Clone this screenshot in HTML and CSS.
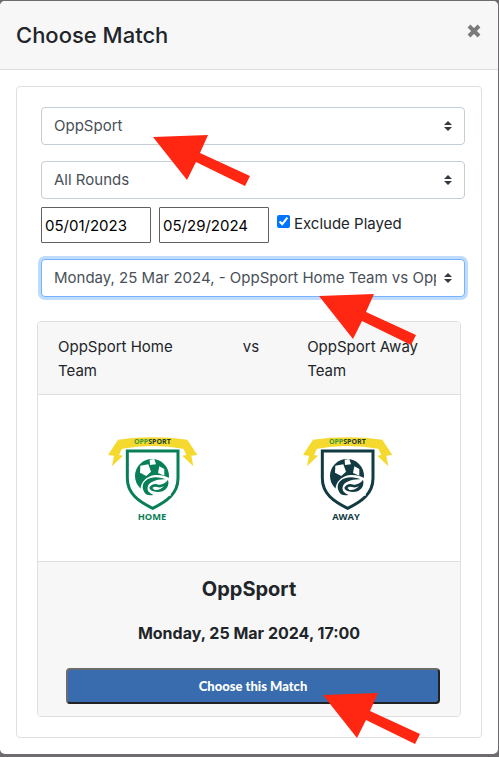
FILE: index.html
```
<!DOCTYPE html>
<html lang="en">
<head>
    <meta charset="UTF-8">
    <meta name="viewport" content="width=device-width, initial-scale=1.0">
    <title>Choose Match</title>
    <link rel="stylesheet" href="styles.css">
</head>
<body>

<!-- Shapes shared by both team badges and the arrows -->
<svg class="defs" aria-hidden="true">
    <symbol id="badge" viewBox="18 30 276 276">
        <path class="ribbon" d="M54 44 Q158 30 262 44 L254 72 Q158 54 62 72 Z"/>
        <path class="ribbon" d="M54 44 L24 90 L42 92 L36 124 L69 92 L57 90 L66 71 Z"/>
        <path class="ribbon" d="M262 44 L292 90 L274 92 L280 124 L247 92 L259 90 L250 71 Z"/>
        <path class="shield" d="M82 78 H234 V160 C234 206 200 230 158 250 C116 230 82 206 82 160 Z"/>
        <circle class="ink" cx="156" cy="153" r="51"/>
        <path class="paper" d="M121 122 L145 118 L153 140 L139 153 L120 143 Z"/>
        <path class="paper" d="M149 104 L163 102 L168 118 L150 120 Z"/>
        <path class="paper" d="M178 124 L193 132 L193 152 L174 144 Z"/>
        <path class="paper" d="M124 212 C114 182 132 154 166 150 C184 149 198 152 212 162 L212 212 Z"/>
        <path class="ink" d="M138 208 C115 182 136 158 166 157 C180 157 190 160 196 163 C168 162 146 172 143 186 C140 200 152 205 160 210 C152 212 144 211 138 208 Z"/>
        <path class="ink" d="M148 188 C153 178 164 174 176 179 C190 179 198 172 204 164 C211 190 188 207 160 199 C154 197 149 193 148 188 Z"/>
        <path class="paper" d="M157 189 Q163 183 171 186 Q182 190 192 183 Q180 197 164 195 Z"/>
    </symbol>
    <symbol id="arrow" viewBox="0 0 100 54">
        <path fill="#ff2712" d="M2 4 L57 2 L49 20 L99 43 L94 53 L45 29 L36 47 Z"/>
    </symbol>
</svg>

<div class="modal">
    <div class="modal-header">
        <h1>Choose Match</h1>
        <button type="button" class="close" aria-label="Close">
            <svg width="14" height="14" viewBox="0 0 14 14"><path d="M2 2 L12 12 M12 2 L2 12"/></svg>
        </button>
    </div>
    <div class="modal-body">
        <div class="panel">
            <form class="filters">
                <div class="field">
                    <select class="custom-select" aria-label="Competition">
                        <option>OppSport</option>
                    </select>
                    <svg class="arrow arrow-competition" aria-hidden="true"><use href="#arrow"/></svg>
                </div>
                <div class="field">
                    <select class="custom-select" aria-label="Round">
                        <option>All Rounds</option>
                    </select>
                </div>
                <div class="dates">
                    <input type="text" class="date" value="05/01/2023" aria-label="From">
                    <input type="text" class="date" value="05/29/2024" aria-label="To">
                    <div class="check">
                        <input type="checkbox" id="exclude" checked>
                        <label for="exclude">Exclude Played</label>
                    </div>
                </div>
                <div class="field">
                    <select class="custom-select active" aria-label="Match">
                        <option>Monday, 25 Mar 2024, - OppSport Home Team vs OppSport Away Team</option>
                    </select>
                    <svg class="arrow arrow-match" aria-hidden="true"><use href="#arrow"/></svg>
                </div>
            </form>

            <div class="match">
                <div class="match-header">
                    <div>OppSport Home Team</div>
                    <div class="vs">vs</div>
                    <div>OppSport Away Team</div>
                </div>
                <div class="match-logos">
                    <svg class="logo home" viewBox="18 30 276 276" role="img" aria-label="Home badge">
                        <use href="#badge" x="18" y="30" width="276" height="276"/>
                        <text class="brand" x="157" y="58"><tspan class="opp">OPP</tspan><tspan class="sport">SPORT</tspan></text>
                        <text class="side" x="156" y="284">HOME</text>
                    </svg>
                    <svg class="logo away" viewBox="18 30 276 276" role="img" aria-label="Away badge">
                        <use href="#badge" x="18" y="30" width="276" height="276"/>
                        <text class="brand" x="157" y="58"><tspan class="opp">OPP</tspan><tspan class="sport">SPORT</tspan></text>
                        <text class="side" x="153" y="284">AWAY</text>
                    </svg>
                </div>
                <div class="match-footer">
                    <h2>OppSport</h2>
                    <p>Monday, 25 Mar 2024, 17:00</p>
                    <div class="action">
                        <button type="button" class="choose">Choose this Match</button>
                        <svg class="arrow arrow-choose" aria-hidden="true"><use href="#arrow"/></svg>
                    </div>
                </div>
            </div>
        </div>
    </div>
</div>

</body>
</html>
```
FILE: styles.css
```
* {
    box-sizing: border-box;
}
body {
    margin: 0;
    padding: 1px 1px 3px 0;
    background-color: #6e6c6e;
    color: #212529;
    font-family: Inter, "Liberation Sans", sans-serif;
    font-size: 15px;
    line-height: 24px;
}
.defs {
    display: none;
}
.modal {
    background-color: #fff;
    border-radius: 5px;
    overflow: hidden;
}
.modal-header {
    display: flex;
    justify-content: space-between;
    align-items: flex-start;
    padding: 16px;
    background-color: #f7f7f7;
    border-bottom: 1px solid #dcdddf;
}
h1 {
    margin: 0;
    font-size: 22px;
    font-weight: 500;
    line-height: 36px;
}
.close {
    display: flex;
    padding: 7px 1px;
    border: none;
    background: none;
    cursor: pointer;
}
.close path {
    stroke: #7b7b7b;
    stroke-width: 4;
}
.modal-body {
    padding: 16px;
}
.panel {
    padding: 20px;
    border: 1px solid #dfdfdf;
    border-radius: 4px;
}
.filters {
    margin: 0 -4px 24px 4px;
}
.field {
    position: relative;
    margin-bottom: 16px;
}
.custom-select {
    display: block;
    width: 100%;
    height: 38px;
    padding: 6px 28px 6px 12px;
    border: 1px solid #c6ced5;
    border-radius: 4px;
    appearance: none;
    color: #495057;
    font-family: inherit;
    font-size: 15px;
    line-height: 24px;
    background: #fff url("data:image/svg+xml,%3csvg xmlns='http://www.w3.org/2000/svg' viewBox='0 0 4 5'%3e%3cpath fill='%23343a40' d='M2 0L0 2h4zm0 5L0 3h4z'/%3e%3c/svg%3e") no-repeat right 12px center / 8px 10px;
}
.custom-select.active {
    border-color: #74b4fc;
    box-shadow: 0 0 0 3px #bfdcff;
}
.dates {
    display: flex;
    gap: 8px;
    margin: -8px 0 16px;
}
.date {
    width: 110px;
    height: 36px;
    padding: 1px 3px;
    border: 1px solid #606060;
    border-radius: 1px;
    color: #000;
    font-family: inherit;
    font-size: 15px;
}
.check {
    display: flex;
    align-items: flex-start;
    gap: 4px;
    padding-top: 5px;
}
.check input {
    width: 13px;
    height: 13px;
    margin: 3px 0;
    accent-color: #0075ff;
}
.match {
    border: 1px solid #dfdfdf;
    border-radius: 4px;
}
.match-header {
    display: grid;
    grid-template-columns: 8fr 7fr 8fr;
    padding: 13px 20px 11px;
    background-color: #f7f7f7;
    border-bottom: 1px solid #dfdfdf;
    border-radius: 3px 3px 0 0;
}
.vs {
    padding-left: 4px;
    text-align: center;
}
.match-logos {
    display: grid;
    grid-template-columns: 1fr 1fr;
    justify-items: center;
    padding: 40px 16px 34px;
}
.logo {
    width: 92px;
    height: 92px;
}
.home {
    color: #087f59;
}
.away {
    color: #123a42;
}
.ribbon {
    fill: #f5d92f;
}
.shield {
    fill: #fff;
    stroke: currentColor;
    stroke-width: 9;
}
.ink {
    fill: currentColor;
}
.paper {
    fill: #fff;
}
.brand, .side {
    font-family: "Open Sans", sans-serif;
    font-weight: 700;
    text-anchor: middle;
}
.brand {
    font-size: 21px;
}
.opp {
    fill: #3f9a3c;
}
.sport {
    fill: #173f38;
}
.side {
    font-size: 28px;
    fill: currentColor;
}
.match-footer {
    padding: 12px 20px;
    background-color: #f7f7f7;
    border-top: 1px solid #dfdfdf;
    border-radius: 0 0 3px 3px;
    text-align: center;
}
h2 {
    margin: 3px 0 21px;
    font-size: 20px;
    font-weight: 700;
    line-height: 24px;
}
p {
    margin: 0 0 24px;
    font-size: 16px;
    font-weight: 700;
    line-height: 22px;
}
.action {
    position: relative;
    margin-left: 8px;
}
.choose {
    display: block;
    width: 100%;
    height: 36px;
    border: 2px solid;
    border-color: #6c6c6c #222 #222 #6c6c6c;
    border-radius: 4px;
    background-color: #386cae;
    color: #fff;
    font-family: Lato, sans-serif;
    font-size: 13px;
    font-weight: 900;
    cursor: pointer;
}

/* Pointers laid over the steps to follow */
.arrow {
    position: absolute;
    z-index: 1;
    width: 100px;
    height: 54px;
    pointer-events: none;
}
.arrow-competition {
    top: 26px;
    left: 110px;
}
.arrow-match {
    top: 33px;
    left: 276px;
}
.arrow-choose {
    top: 23px;
    left: 255px;
}
```
